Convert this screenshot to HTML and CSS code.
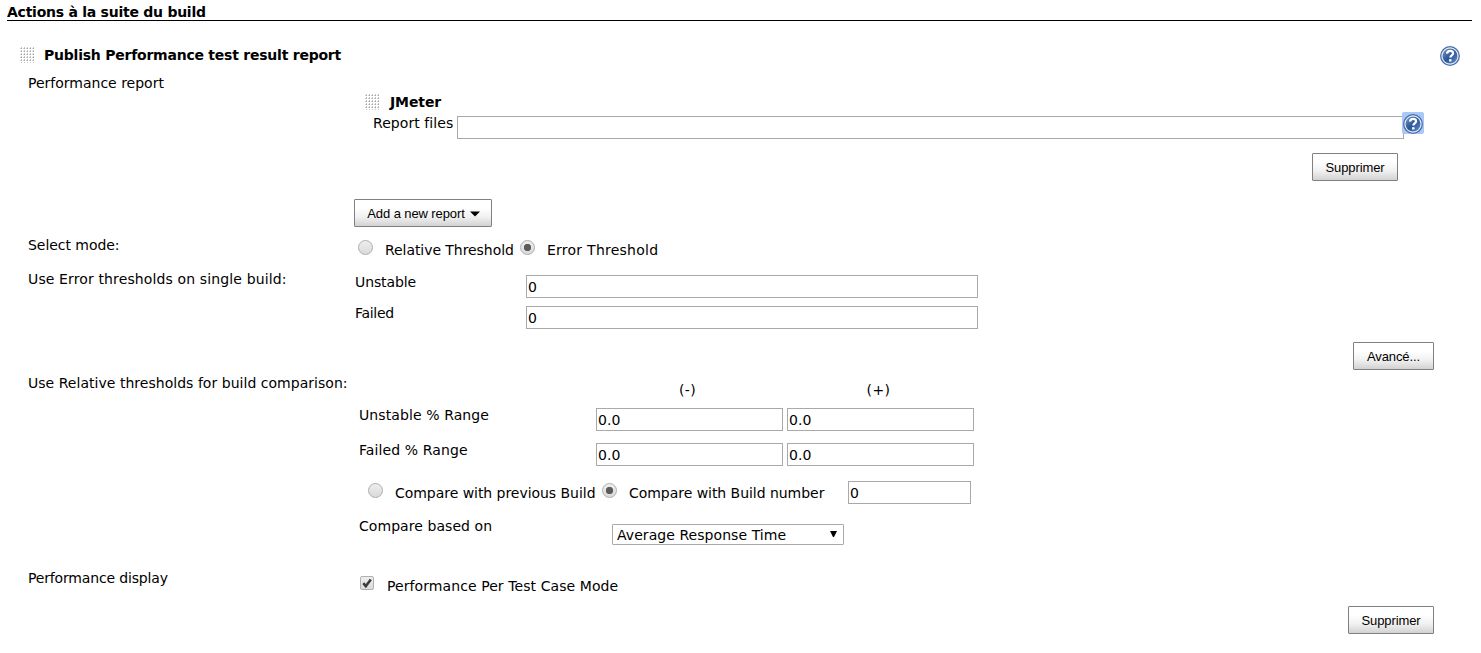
FILE: index.html
```html
<!DOCTYPE html>
<html lang="fr">
<head>
<meta charset="utf-8">
<title>Actions à la suite du build</title>
<link rel="stylesheet" href="styles.css">
</head>
<body>
<svg width="0" height="0" class="defs">
  <defs>
    <linearGradient id="blue" x1="0" y1="0" x2="1" y2="1">
      <stop offset="0" stop-color="#7d9dca"/><stop offset=".5" stop-color="#2a5599"/><stop offset="1" stop-color="#6590c6"/>
    </linearGradient>
    <pattern id="dots" width="3" height="3" patternUnits="userSpaceOnUse">
      <rect width="3" height="3" fill="#fff"/><rect y="1" width="2" height="1" fill="#d2d2d2"/><rect x="1" width="1" height="2" fill="#c4c4c4"/><rect x="1" y="1" width="1" height="1" fill="#aaa"/>
    </pattern>
    <symbol id="help" viewBox="0 0 20 20">
      <circle cx="10" cy="10" r="9.3" fill="#e9eff7" stroke="#4a70a8" stroke-width="1.3"/>
      <circle cx="10" cy="10" r="7.5" fill="url(#blue)"/>
      <path d="M7 7.6C7.2 5.7 8.4 4.8 10.1 4.8c1.800 0 3 1 3 2.500 0 2.100-2.800 2.200-2.800 4.200" fill="none" stroke="#fff" stroke-width="2.300"/>
      <rect x="9.100" y="13.200" width="2.400" height="2.300" fill="#fff"/>
    </symbol>
  </defs>
</svg>
<h1 class="section">Actions à la suite du build</h1>
<form class="form">
  <div class="title-row">
    <svg class="handle" width="15" height="16"><rect width="15" height="16" fill="url(#dots)"/></svg>
    <b class="title">Publish Performance test result report</b>
    <svg class="help" width="20" height="20"><use href="#help"/></svg>
  </div>

  <div class="row report">
    <label class="name">Performance report</label>
    <div class="content">
      <div class="parser-title">
        <svg class="handle" width="15" height="16"><rect width="15" height="16" fill="url(#dots)"/></svg>
        <b>JMeter</b>
      </div>
      <div class="files">
        <label>Report files</label>
        <input class="box files-input" type="text">
        <span class="help-focus"><svg width="20" height="20"><use href="#help"/></svg></span>
      </div>
      <button type="button" class="btn remove-parser">Supprimer</button>
      <button type="button" class="btn add">Add a new report <svg width="10" height="6"><path d="M0 .5h10L5 5.500z"/></svg></button>
    </div>
  </div>

  <div class="row mode">
    <label class="name">Select mode:</label>
    <div class="content radios">
      <input type="radio" name="mode"><span class="rel">Relative Threshold</span>
      <input type="radio" name="mode" checked><span class="err">Error Threshold</span>
    </div>
  </div>

  <div class="row errors">
    <label class="name single">Use Error thresholds on single build:</label>
    <div class="content">
      <div class="pair"><label>Unstable</label><input class="box" type="text" value="0"></div>
      <div class="pair"><label class="failed">Failed</label><input class="box" type="text" value="0"></div>
      <button type="button" class="btn advanced">Avancé...</button>
    </div>
  </div>

  <div class="row relative">
    <label class="name comparison">Use Relative thresholds for build comparison:</label>
    <div class="content">
      <div class="range head"><span></span><span>(-)</span><span>(+)</span></div>
      <div class="range"><label>Unstable % Range</label><input class="box" type="text" value="0.0"><input class="box" type="text" value="0.0"></div>
      <div class="range"><label>Failed % Range</label><input class="box" type="text" value="0.0"><input class="box" type="text" value="0.0"></div>
      <div class="radios compare">
        <input type="radio" name="cmp"><span class="prev">Compare with previous Build</span>
        <input type="radio" name="cmp" checked><span class="num">Compare with Build number</span>
        <input class="box number" type="text" value="0">
      </div>
      <div class="based">
        <label>Compare based on</label>
        <div class="select"><span>Average Response Time</span><svg width="7" height="6"><path d="M0 0h7L4 6H3z"/></svg></div>
      </div>
    </div>
  </div>

  <div class="row display">
    <label class="name">Performance display</label>
    <div class="content">
      <div class="check-row"><span class="check"><svg width="14" height="14"><path d="M3.300 7.200l2.500 3L10.800 3.500" fill="none" stroke="#3c3c3c" stroke-width="2.600"/></svg></span><span class="case">Performance Per Test Case Mode</span></div>
      <button type="button" class="btn remove">Supprimer</button>
    </div>
  </div>
</form>
</body>
</html>
```
FILE: styles.css
```css
* { box-sizing: border-box; }
body { margin: 0; background: #fff; color: #000; font: 14px/18px "DejaVu Sans", Verdana, sans-serif; white-space: nowrap; overflow: hidden; }
svg { display: block; flex: none; }
.defs { position: absolute; }
.section { margin: 0 9px 0 7px; height: 21px; padding-top: 3px; border-bottom: 1px solid #000; font-size: 14px; line-height: 18px; width: 1465px; letter-spacing: -.25px; }
.title-row { display: flex; height: 53px; padding: 25px 21px 0 20px; }
.title-row .handle { margin-top: 1px; }
.title { margin-left: 9px; letter-spacing: -.23px; }
.help { margin-left: auto; }
.row { display: flex; padding-left: 28px; }
.name { width: 326px; flex: none; }
.content { width: 1080px; display: flex; flex-direction: column; align-items: flex-start; }

.box { appearance: none; height: 23px; margin: 0; padding: 1px; border: 1px solid #a9a9a9; border-radius: 0; background: #fff; font: inherit; color: #000; letter-spacing: .1px; outline: 0; }
.btn { height: 28px; padding: 1px 0 0; border: 1px solid #808080; border-radius: 1px; background: linear-gradient(#fff 30%, #f1f1f1 65%, #d2d2d2); color: #000; font: 13px/26px "Liberation Sans", Arial, sans-serif; letter-spacing: -.1px; }

.report { height: 162px; }
.parser-title { display: flex; margin: 19px 0 0 11px; height: 19px; }
.parser-title .handle { margin-top: 1px; }
.parser-title b { margin-left: 10px; letter-spacing: -.1px; }
.files { display: flex; margin-left: 19px; height: 27px; }
.files label { width: 84px; margin-top: 2px; letter-spacing: .07px; }
.files-input { width: 947px; margin-top: 4px; }
.help-focus { margin-left: -2px; width: 22px; height: 22px; padding: 2px 0 0 1px; background: #a9c8f8; border-radius: 2px; z-index: 1; }
.remove-parser { width: 86px; margin: 14px 0 0 958px; }
.add { width: 138px; margin-top: 18px; padding-left: 1px; display: flex; align-items: center; justify-content: center; gap: 5px; }

.mode { height: 34px; }
.mode .name { letter-spacing: -.05px; }
.radios { display: flex; flex-direction: row; align-items: flex-start; }
input[type="radio"] { appearance: none; flex: none; width: 15px; height: 15px; margin: 4px 0 0; border: 1px solid #adadad; border-radius: 50%; background: linear-gradient(#eee, #dadada); }
input[type="radio"]:checked { background: radial-gradient(circle, #5c5c5c 3.400px, transparent 4px), linear-gradient(#eee, #dadada); }
.mode .radios { padding-left: 4px; }
.mode span { margin-top: 5px; }
.rel { width: 147px; padding-left: 12px; letter-spacing: -.06px; }
.err { padding-left: 12px; letter-spacing: .25px; }

.errors { height: 104px; }
.single { letter-spacing: .13px; }
.comparison { letter-spacing: .03px; }
.errors .content { padding-top: 5px; }
.pair { display: flex; padding-left: 1px; height: 31px; }
.pair label { width: 171px; margin-top: -2px; letter-spacing: -.1px; }
.pair .failed { letter-spacing: -.3px; }
.pair .box { width: 452px; }
.advanced { width: 81px; margin: 5px 0 0 999px; }

.relative { height: 195px; }
.range { display: grid; grid-template-columns: 237px 187px 187px; column-gap: 0; height: 35px; padding-left: 5px; }
.range .box + .box { margin-left: 4px; width: 187px; }
.range label { margin-top: -2px; letter-spacing: .1px; }
.head { height: 34px; padding-top: 7px; text-align: center; letter-spacing: .4px; }
.head span:nth-child(2) { padding-right: 4px; }
.head span:nth-child(3) { padding-left: 4px; }
.compare { height: 39px; padding-left: 14px; }
.compare input[type="radio"] { margin-top: 5px; }
.compare span { margin-top: 6px; padding-left: 12px; letter-spacing: -.04px; }
.prev { width: 219px; }
.num { width: 231px; }
.number { width: 123px; margin-top: 3px; }
.based { display: flex; padding-left: 5px; }
.based label { width: 253px; letter-spacing: .06px; }
.select { display: flex; width: 232px; height: 21px; margin-top: 7px; padding: 0 6px 0 4px; justify-content: space-between; border: 1px solid #a9a9a9; border-radius: 1px; line-height: 20px; letter-spacing: .06px; }
.select svg { margin-top: 6px; }

.display { height: 80px; }
.display .name { letter-spacing: -.16px; }
.check-row { display: flex; height: 37px; padding: 7px 0 0 6px; }
.check { width: 14px; height: 14px; border: 1px solid #b0b0b0; border-radius: 2px; background: linear-gradient(#eee, #dcdcdc); }
.check svg { margin: -1px; }
.case { margin: 1px 0 0 13px; letter-spacing: .08px; }
.remove { width: 86px; margin-left: 994px; }
```
